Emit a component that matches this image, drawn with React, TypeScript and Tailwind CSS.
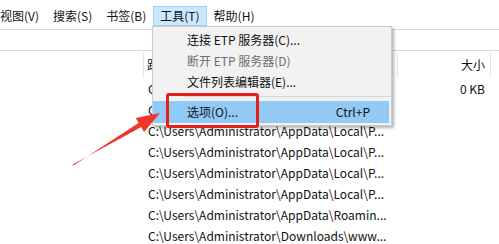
import React from 'react';

const menuBar = ['视图(V)', '搜索(S)', '书签(B)', '工具(T)', '帮助(H)'];

const rows: { path: string; size: string }[] = [
  { path: 'C:\\Users\\Administrator\\AppData\\Local\\P...', size: '0 KB' },
  { path: 'C:\\Users\\Administrator\\AppData\\Local\\P...', size: '' },
  { path: 'C:\\Users\\Administrator\\AppData\\Local\\P...', size: '' },
  { path: 'C:\\Users\\Administrator\\AppData\\Local\\P...', size: '' },
  { path: 'C:\\Users\\Administrator\\AppData\\Local\\P...', size: '' },
  { path: 'C:\\Users\\Administrator\\AppData\\Local\\P...', size: '' },
  { path: 'C:\\Users\\Administrator\\AppData\\Roamin...', size: '' },
  { path: 'C:\\Users\\Administrator\\Downloads\\www...', size: '' },
];

const Sep = () => <div className="w-px h-[25px] mt-[2px] bg-[#e5e5e5] shrink-0" />;

export default function App() {
  return (
    <div className="relative w-[499px] h-[244px] overflow-hidden bg-white text-[12px] text-[#111] font-['Noto_Sans_CJK_SC',sans-serif] leading-none">
      {/* Menu bar */}
      <div className="flex h-[30px] border-b border-[#d9d9d9] ml-[-7px]">
        {menuBar.map((m) => (
          <div
            key={m}
            className={`h-[20px] mt-[6px] px-[6px] flex items-center border ${
              m === '工具(T)' ? 'bg-[#cce8ff] border-[#99d1ff]' : 'border-transparent'
            }`}
          >
            {m}
          </div>
        ))}
      </div>

      {/* Toolbar strip */}
      <div className="h-[21px] border-b border-[#d9d9d9]" />

      {/* Column header */}
      <div className="flex h-[27px]">
        <div className="w-[143px] shrink-0" />
        <Sep />
        <div className="w-[253px] shrink-0 pl-[3px] flex items-center">路径</div>
        <Sep />
        <div className="w-[92px] shrink-0 pr-[5px] flex items-center justify-end">大小</div>
        <Sep />
      </div>

      {/* Rows */}
      {rows.map((r, i) => (
        <div key={i} className="flex h-[21px] items-center">
          <div className="w-[143px] shrink-0" />
          <div className="w-[254px] shrink-0 pl-[5px] whitespace-nowrap">{r.path}</div>
          <div className="w-[93px] shrink-0 pr-[5px] text-right">{r.size}</div>
        </div>
      ))}

      {/* Dropdown menu */}
      <div className="absolute left-[152px] top-[26px] w-[240px] bg-[#f2f2f2] border border-[#cccccc] py-[2px] shadow-[2px_2px_3px_rgba(0,0,0,0.3)]">
        <div className="h-[21px] flex items-center pl-[34px]">连接 ETP 服务器(C)...</div>
        <div className="h-[21px] flex items-center pl-[34px] text-[#6d6d6d]">断开 ETP 服务器(D)</div>
        <div className="h-[21px] flex items-center pl-[34px]">文件列表编辑器(E)...</div>
        <div className="h-[9px] flex items-center pl-[30px]">
          <div className="h-px w-full bg-[#d7d7d7]" />
        </div>
        <div className="h-[22px] flex items-center pl-[34px] pr-[19px] mr-[2px] bg-[#91c9f7]">
          <span>选项(O)...</span>
          <span className="ml-auto">Ctrl+P</span>
        </div>
      </div>

      {/* Annotation: red box */}
      <div className="absolute left-[166px] top-[93px] w-[93px] h-[35px] border-[3px] border-[#e3201b] rounded-[3px]" />

      {/* Annotation: arrow */}
      <svg className="absolute left-0 top-0 pointer-events-none" width="499" height="244" viewBox="0 0 499 244">
        <polygon
          points="72.6,164.4 141.2,127.1 144,131.9 160,113 135.8,118.1 138.6,122.9 73.4,165.6"
          fill="#f0342a"
        />
      </svg>
    </div>
  );
}
